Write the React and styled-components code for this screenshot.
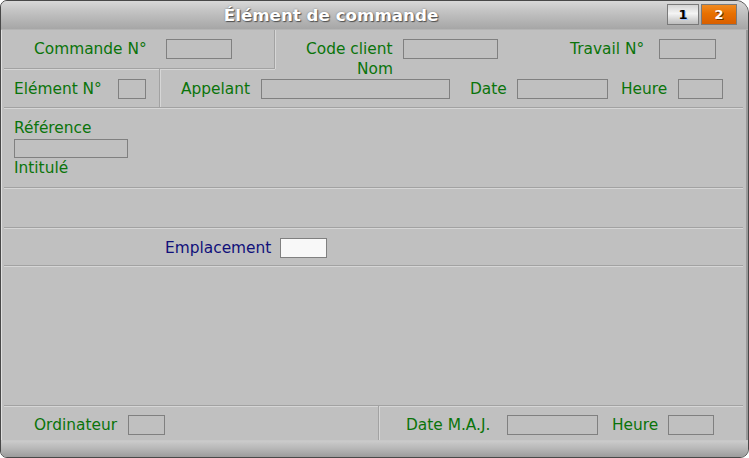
import React from "react";
import styled, { createGlobalStyle } from "styled-components";

const Global = createGlobalStyle`
  * { box-sizing: border-box; }
  html, body { margin: 0; padding: 0; background: #ffffff; }
  body { font-family: "DejaVu Sans", Verdana, sans-serif; }
`;

const Window = styled.div`
  width: 749px;
  height: 458px;
  display: flex;
  flex-direction: column;
  border: 1px solid #484848;
  border-radius: 7px 13px 9px 7px;
  overflow: hidden;
  background: #c0c0c0;
`;

const TitleBar = styled.div`
  height: 29px;
  flex: none;
  display: flex;
  align-items: center;
  background: linear-gradient(#d8d8d8 0%, #c4c4c4 35%, #a6a6a6 100%);
  border-bottom: 1px solid #b4b4b4;
  padding-right: 11px;
`;

const Title = styled.div`
  flex: 1;
  text-align: center;
  padding-right: 6px;
  color: #ffffff;
  font-weight: bold;
  font-size: 16.7px;
  text-shadow: 1px 1px 1px #505050, 0 0 2px #808080;
  margin-top: -1px;
`;

const Tabs = styled.div`
  display: flex;
  gap: 2px;
  margin-top: -2px;
`;

const Tab = styled.div`
  height: 21px;
  width: ${(p) => p.$w}px;
  display: flex;
  align-items: center;
  justify-content: center;
  font-weight: bold;
  font-size: 13px;
  border: 1px solid #7a7a7a;
  color: ${(p) => (p.$active ? "#ffffff" : "#000000")};
  text-shadow: ${(p) => (p.$active ? "1px 1px 0 #603000" : "1px 1px 0 #a0c0ff")};
  background: ${(p) =>
    p.$active
      ? "linear-gradient(#f08a20 0%, #e87000 45%, #d85f00 100%)"
      : "linear-gradient(#d4d4d4 0%, #f4f4f4 45%, #bcbcbc 100%)"};
`;

const Main = styled.div`
  flex: 1;
  display: flex;
  flex-direction: column;
  padding: 0 3px 0 2px;
  border-left: 1px solid #e0e0e0;
  border-right: 2px solid #9a9a9a;
`;

const Section = styled.div`
  height: ${(p) => p.$h}px;
  flex: none;
  display: flex;
  flex-direction: ${(p) => (p.$col ? "column" : "row")};
  border-bottom: ${(p) => (p.$last ? "none" : "1px solid #a2a2a2")};
  box-shadow: ${(p) => (p.$last ? "none" : "0 1px 0 #d6d6d6")};
`;

const Row = styled.div`
  height: ${(p) => p.$h}px;
  flex: none;
  display: flex;
`;

const Cell = styled.div`
  width: ${(p) => (p.$w ? `${p.$w}px` : "auto")};
  flex: ${(p) => (p.$w ? "none" : "1")};
  display: flex;
  align-items: flex-start;
  padding-left: ${(p) => p.$pl || 0}px;
  padding-top: ${(p) => p.$pt || 0}px;
  border-right: ${(p) => (p.$br ? "1px solid #a2a2a2" : "none")};
  border-bottom: ${(p) => (p.$bb ? "1px solid #a2a2a2" : "none")};
  box-shadow: ${(p) =>
    [p.$br ? "1px 0 0 #d6d6d6" : null, p.$bb ? "0 1px 0 #d6d6d6" : null]
      .filter(Boolean)
      .join(", ") || "none"};
`;

const Label = styled.span`
  display: inline-block;
  width: ${(p) => (p.$w ? `${p.$w}px` : "auto")};
  margin-left: ${(p) => p.$ml || 0}px;
  color: ${(p) => (p.$navy ? "#10107a" : "#0a740a")};
  font-size: 15.4px;
  line-height: 20px;
  white-space: nowrap;
  flex: none;
`;

const Input = styled.div`
  width: ${(p) => p.$w}px;
  height: ${(p) => p.$h || 20}px;
  flex: none;
  border: 1px solid #808080;
  background: ${(p) => (p.$white ? "#f8f8f8" : "transparent")};
  margin-top: ${(p) => p.$mt || 0}px;
`;

const Group = styled.div`
  display: flex;
  flex-direction: column;
  margin-left: ${(p) => p.$ml || 0}px;
`;

const Line = styled.div`
  display: flex;
  align-items: flex-start;
`;

const BottomBar = styled.div`
  height: 17px;
  flex: none;
  background: linear-gradient(#cbcbcb 0%, #b8b8b8 45%, #9c9c9c 100%);
  border-top: 1px solid #c8c8c8;
`;

export default function App() {
  return (
    <>
      <Global />
      <Window>
        <TitleBar>
          <Title>Élément de commande</Title>
          <Tabs>
            <Tab $w={32}>1</Tab>
            <Tab $w={36} $active>2</Tab>
          </Tabs>
        </TitleBar>
        <Main>
          <Section $h={78} $col>
            <Row $h={39}>
              <Cell $w={271} $pl={30} $pt={9} $br $bb>
                <Label $w={132}>Commande N°</Label>
                <Input $w={66} />
              </Cell>
              <Cell $pl={31} $pt={9}>
                <Group>
                  <Line>
                    <Label $w={97}>Code client</Label>
                    <Input $w={95} />
                  </Line>
                  <Label $ml={51}>Nom</Label>
                </Group>
                <Label $w={89} $ml={72}>Travail N°</Label>
                <Input $w={57} />
              </Cell>
            </Row>
            <Row $h={38}>
              <Cell $w={156} $pl={10} $pt={10} $br>
                <Label $w={104}>Elément N°</Label>
                <Input $w={28} />
              </Cell>
              <Cell $pl={21} $pt={10}>
                <Label $w={80}>Appelant</Label>
                <Input $w={189} />
                <Label $w={47} $ml={20}>Date</Label>
                <Input $w={91} />
                <Label $w={57} $ml={13}>Heure</Label>
                <Input $w={45} />
              </Cell>
            </Row>
          </Section>
          <Section $h={80}>
            <Cell $pl={10} $pt={10}>
              <Group>
                <Label>Référence</Label>
                <Input $w={114} $h={19} $mt={1} />
                <Label>Intitulé</Label>
              </Group>
            </Cell>
          </Section>
          <Section $h={40} />
          <Section $h={38}>
            <Cell $pl={161} $pt={10}>
              <Label $w={115} $navy>Emplacement</Label>
              <Input $w={47} $white />
            </Cell>
          </Section>
          <Section $h={140} />
          <Section $h={34} $last>
            <Cell $w={375} $pl={30} $pt={9} $br>
              <Label $w={94}>Ordinateur</Label>
              <Input $w={37} />
            </Cell>
            <Cell $pl={27} $pt={9}>
              <Label $w={101}>Date M.A.J.</Label>
              <Input $w={91} />
              <Label $w={56} $ml={14}>Heure</Label>
              <Input $w={46} />
            </Cell>
          </Section>
        </Main>
        <BottomBar />
      </Window>
    </>
  );
}
